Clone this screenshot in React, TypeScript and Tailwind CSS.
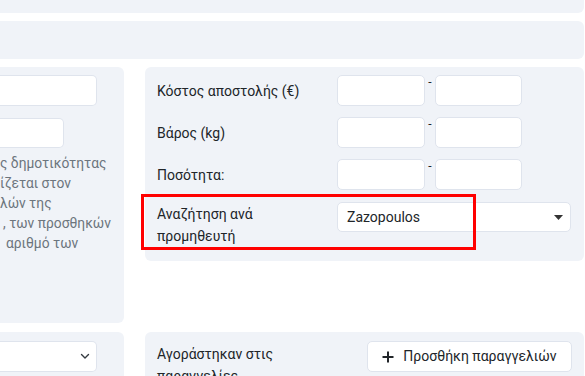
import React from "react";

const inputCls = "h-[31px] rounded-[5px] border border-[#dfe4ed] bg-white";

function RangeRow({ label }: { label: string }) {
  return (
    <div className="flex items-center h-[31px]">
      <div className="w-[180px] shrink-0 text-[14px] leading-[20px] text-[#212529]">{label}</div>
      <div className={`w-[88px] ${inputCls}`} />
      <div className="w-[10px] self-start text-center text-[12px] leading-[14px] text-[#212529]">-</div>
      <div className={`w-[87px] ${inputCls}`} />
    </div>
  );
}

export default function App() {
  return (
    <div className="relative w-[585px] h-[376px] overflow-hidden bg-white font-['Roboto',_sans-serif]">
      <div className="w-[584px] h-[13px] bg-[#f0f3f8] rounded-br-[6px]" />
      <div className="w-[584px] h-[38px] mt-[8px] bg-[#f0f3f8] rounded-r-[6px]" />
      <div className="mt-[8px] grid grid-cols-[124px_439px] gap-x-[21px] gap-y-[9px] items-start">
        {/* left top panel */}
        <div className="h-[256px] bg-[#f0f3f8] rounded-r-[6px] pt-[8px]">
          <div className="w-[97px] h-[31px] rounded-r-[5px] border border-l-0 border-[#dfe4ed] bg-white" />
          <div className="w-[64px] h-[30px] mt-[12px] rounded-r-[5px] border border-l-0 border-[#dfe4ed] bg-white" />
          <div className="mt-[5px] text-[13.8px] leading-[20px] text-[#6c757d] whitespace-nowrap">
            <div>ς δημοτικότητας</div>
            <div>ίζεται στον</div>
            <div>λών της</div>
            <div className="ml-[3px]">, των προσθηκών</div>
            <div className="ml-[6px]">αριθμό των</div>
          </div>
        </div>
        {/* right top panel */}
        <div className="bg-[#f0f3f8] rounded-[6px] px-[12px] pt-[8px] pb-[14px] flex flex-col gap-[11px]">
          <RangeRow label="Κόστος αποστολής (€)" />
          <RangeRow label="Βάρος (kg)" />
          <RangeRow label="Ποσότητα:" />
          <div className="flex items-start mt-[1px]">
            <div className="w-[180px] shrink-0 pt-[1px] text-[14px] leading-[22px] text-[#212529]">
              Αναζήτηση ανά
              <br />
              προμηθευτή
            </div>
            <div className="w-[234px] h-[30px] rounded-[5px] border border-[#dfe4ed] bg-white flex items-center justify-between pl-[9px] pr-[7px]">
              <span className="text-[14px] text-[#212529]">Zazopoulos</span>
              <svg width="9" height="5" viewBox="0 0 9 5">
                <path d="M0 0h9L4.5 5z" fill="#333" />
              </svg>
            </div>
          </div>
        </div>
        {/* left bottom panel */}
        <div className="h-[60px] bg-[#f0f3f8] rounded-r-[6px] pt-[9px]">
          <div className="w-[97px] h-[31px] rounded-r-[5px] border border-l-0 border-[#dfe4ed] bg-white flex items-center justify-end pr-[6px]">
            <svg width="10" height="7" viewBox="0 0 10 7">
              <path d="M1.5 1.5l3.5 3.5 3.5-3.5" stroke="#343a40" strokeWidth="1.4" fill="none" strokeLinecap="round" strokeLinejoin="round" />
            </svg>
          </div>
        </div>
        {/* right bottom panel */}
        <div className="h-[60px] bg-[#f0f3f8] rounded-[6px] px-[12px] pt-[9px] flex items-start justify-between">
          <div className="pt-[2px] text-[14px] leading-[22px] text-[#212529]">
            Αγοράστηκαν στις
            <br />
            παραγγελίες
          </div>
          <button className="w-[205px] h-[31px] rounded-[5px] border border-[#dfe4ed] bg-white flex items-center justify-center gap-[9px] text-[14px] text-[#212529]">
            <svg width="12" height="12" viewBox="0 0 12 12">
              <path d="M6 0.5v11M0.5 6h11" stroke="#212529" strokeWidth="2" />
            </svg>
            <span>Προσθήκη παραγγελιών</span>
          </button>
        </div>
      </div>
      <div className="absolute left-[141px] top-[194px] w-[335px] h-[56px] border-[3px] border-[#ff0000]" />
    </div>
  );
}
